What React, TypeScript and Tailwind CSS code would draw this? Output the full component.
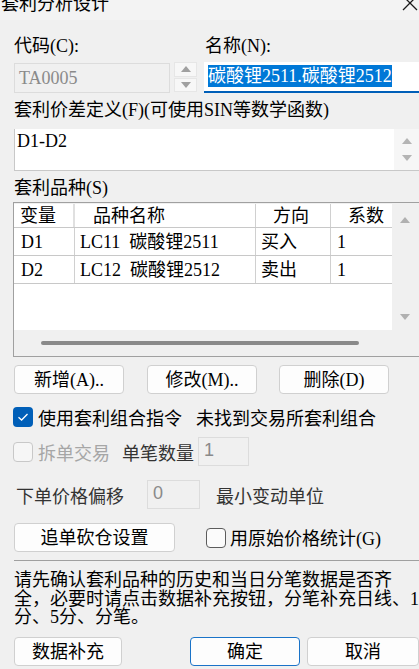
import React from "react";

const ROWS = [
  { v: "D1", name: "LC11 碳酸锂2511", dir: "买入", k: "1" },
  { v: "D2", name: "LC12 碳酸锂2512", dir: "卖出", k: "1" },
];

function Tri({ up, color = "#a0a0a0" }: { up?: boolean; color?: string }) {
  return (
    <svg width="10" height="6" viewBox="0 0 10 6">
      <polygon points={up ? "0,6 5,0 10,6" : "0,0 10,0 5,6"} fill={color} />
    </svg>
  );
}

function Btn({ label, w, primary }: { label: string; w: string; primary?: boolean }) {
  return (
    <div
      className={`${w} h-[29px] flex items-center justify-center rounded-[4px] border bg-[#fdfdfd] ${
        primary ? "border-[#1a73c8]" : "border-[#d0d0d0]"
      }`}
    >
      {label}
    </div>
  );
}

function Check({ checked, disabled }: { checked?: boolean; disabled?: boolean }) {
  if (checked) {
    return (
      <div className="w-[20px] h-[20px] rounded-[4px] bg-[#005fb8] flex items-center justify-center">
        <svg width="12" height="10" viewBox="0 0 12 10">
          <path d="M1.5 5.2 L4.6 8 L10.5 2" stroke="#fff" strokeWidth="1.3" fill="none" />
        </svg>
      </div>
    );
  }
  return (
    <div
      className={`w-[20px] h-[20px] rounded-[4px] border ${
        disabled ? "border-[#c8c8c8] bg-[#f6f6f6]" : "border-[#5c5c5c] bg-[#fbfbfb]"
      }`}
    />
  );
}

export default function App() {
  return (
    <div className="w-[419px] h-[669px] overflow-hidden bg-[#f0f0f0] text-[18px] leading-[18px] text-black font-['Liberation_Serif','Noto_Sans_CJK_SC',serif]">
      {/* title bar */}
      <div className="h-[20px] bg-[#f3f3f3] flex justify-between overflow-hidden">
        <span className="mt-[-7px] ml-[1px] font-['Noto_Sans_CJK_SC',sans-serif] whitespace-nowrap">套利分析设计</span>
        <svg width="16" height="16" viewBox="0 0 16 16" className="mt-[-5px] mr-[1px]">
          <path d="M1 1 L15 15 M15 1 L1 15" stroke="#1a1a1a" strokeWidth="1.3" />
        </svg>
      </div>

      <div className="pl-[14px]">
        {/* code / name */}
        <div className="mt-[17px] flex">
          <div className="w-[183px] flex flex-col">
            <div className="h-[18px]">代码(C):</div>
            <div className="mt-[7px] flex">
              <div className="mt-[1px] w-[156px] h-[30px] border border-[#dcdcdc] bg-[#f0f0f0] text-[#8a8a8a] pl-[4px] flex items-center">
                TA0005
              </div>
              <div className="ml-[4px] w-[23px] h-[30px] flex flex-col gap-[1px]">
                <div className="flex-1 bg-[#f7f7f7] border border-[#e6e6e6] flex items-center justify-center">
                  <Tri up />
                </div>
                <div className="flex-1 bg-[#f7f7f7] border border-[#e6e6e6] flex items-center justify-center">
                  <Tri />
                </div>
              </div>
            </div>
          </div>
          <div className="ml-[7px] flex flex-col">
            <div className="h-[18px] pl-[1px]">名称(N):</div>
            <div className="mt-[7px] w-[230px] h-[31px] bg-white border-b-2 border-[#005fb8] flex items-center pl-[4px] pb-[2px]">
              <span className="bg-[#0078d7] text-white h-[22px] leading-[22px] whitespace-nowrap">碳酸锂2511.碳酸锂2512</span>
            </div>
          </div>
        </div>

        {/* formula */}
        <div className="mt-[8px] h-[18px] whitespace-nowrap">套利价差定义(F)(可使用SIN等数学函数)</div>
        <div className="mt-[10px] w-[405px] h-[42px] bg-white border-l border-b border-[#c8c8c8] flex">
          <div className="flex-1 pl-[2px] pt-[3px]">D1-D2</div>
          <div className="w-[25px] bg-[#f6f6f6] flex flex-col items-center justify-between py-[9px]">
            <Tri up color="#b4b4b4" />
            <Tri color="#b4b4b4" />
          </div>
        </div>

        {/* list */}
        <div className="mt-[8px] h-[18px]">套利品种(S)</div>
        <div className="mt-[5px] ml-[-1px] w-[410px] h-[155px] border border-[#a0a0a0] bg-[#f0f0f0] flex flex-col">
          <div className="h-[127px] flex">
            <div className="w-[378px] bg-white mt-[1px] flex flex-col">
              <div className="h-[24px] flex border-b border-[#c8c8c8]">
                <div className="w-[61px] pl-[6px] flex items-center border-r-2 border-[#e0e0e0]">变量</div>
                <div className="w-[181px] pl-[18px] flex items-center border-r border-[#d0d0d0]">品种名称</div>
                <div className="w-[75px] pl-[17px] flex items-center border-r border-[#d0d0d0]">方向</div>
                <div className="flex-1 pl-[17px] flex items-center">系数</div>
              </div>
              {ROWS.map((r) => (
                <div key={r.v} className="h-[28px] flex border-b border-[#c8c8c8]">
                  <div className="w-[61px] pl-[7px] flex items-center border-r border-[#d0d0d0]">{r.v}</div>
                  <div className="w-[181px] pl-[5px] flex items-center border-r border-[#d0d0d0] whitespace-pre">
                    {r.name.replace(" ", "  ")}
                  </div>
                  <div className="w-[75px] pl-[5px] flex items-center border-r border-[#d0d0d0]">{r.dir}</div>
                  <div className="flex-1 pl-[6px] flex items-center">{r.k}</div>
                </div>
              ))}
            </div>
            <div className="w-[25px] flex flex-col items-center justify-between pt-[14px] pb-[10px]">
              <Tri up color="#b0b0b0" />
              <Tri color="#b0b0b0" />
            </div>
          </div>
          <div className="flex-1 flex items-center pl-[27px] pb-[1px]">
            <div className="w-[318px] h-[4px] rounded-full bg-[#8a8a8a]" />
          </div>
        </div>

        {/* list buttons */}
        <div className="mt-[8px] flex">
          <Btn label="新增(A).." w="w-[110px]" />
          <div className="ml-[23px]">
            <Btn label="修改(M).." w="w-[110px]" />
          </div>
          <div className="ml-[22px]">
            <Btn label="删除(D)" w="w-[110px]" />
          </div>
        </div>

        {/* options */}
        <div className="mt-[12px] h-[21px] flex items-center ml-[-1px] font-['Noto_Sans_CJK_SC',sans-serif] whitespace-nowrap">
          <Check checked />
          <span className="ml-[5px]">使用套利组合指令</span>
          <span className="ml-[14px]">未找到交易所套利组合</span>
        </div>

        <div className="mt-[10px] h-[29px] flex items-center ml-[-1px] font-['Noto_Sans_CJK_SC',sans-serif] whitespace-nowrap">
          <Check disabled />
          <span className="ml-[5px] text-[#a6a6a6]">拆单交易</span>
          <span className="ml-[12px] text-[#333]">单笔数量</span>
          <div className="ml-[4px] w-[51px] h-[29px] border border-[#dcdcdc] text-[#8a8a8a] pl-[5px] pt-[3px] font-['Liberation_Sans',sans-serif]">
            1
          </div>
        </div>

        <div className="mt-[14px] h-[29px] flex items-center font-['Noto_Sans_CJK_SC',sans-serif] whitespace-nowrap">
          <span className="ml-[2px] text-[#333]">下单价格偏移</span>
          <div className="ml-[23px] w-[53px] h-[29px] border border-[#dcdcdc] text-[#8a8a8a] pl-[5px] pt-[3px] font-['Liberation_Sans',sans-serif]">
            0
          </div>
          <span className="ml-[16px] text-[#333]">最小变动单位</span>
        </div>

        <div className="mt-[14px] h-[29px] flex items-center whitespace-nowrap">
          <Btn label="追单砍仓设置" w="w-[161px]" />
          <div className="ml-[31px]">
            <Check />
          </div>
          <span className="ml-[4px] font-['Noto_Sans_CJK_SC',sans-serif]">
            用原始价格统计<span className="font-['Liberation_Serif',serif]">(G)</span>
          </span>
        </div>

        <div className="mt-[8px] h-px bg-[#a0a0a0]" />

        <div className="mt-[10px] h-[56px] leading-[18.5px] whitespace-nowrap">
          请先确认套利品种的历史和当日分笔数据是否齐
          <br />
          全，必要时请点击数据补充按钮，分笔补充日线、1
          <br />
          分、5分、分笔。
        </div>

        <div className="mt-[10px] flex">
          <Btn label="数据补充" w="w-[110px]" />
          <div className="ml-[68px]">
            <Btn label="确定" w="w-[110px]" primary />
          </div>
          <div className="ml-[7px]">
            <Btn label="取消" w="w-[112px]" />
          </div>
        </div>
      </div>
    </div>
  );
}
